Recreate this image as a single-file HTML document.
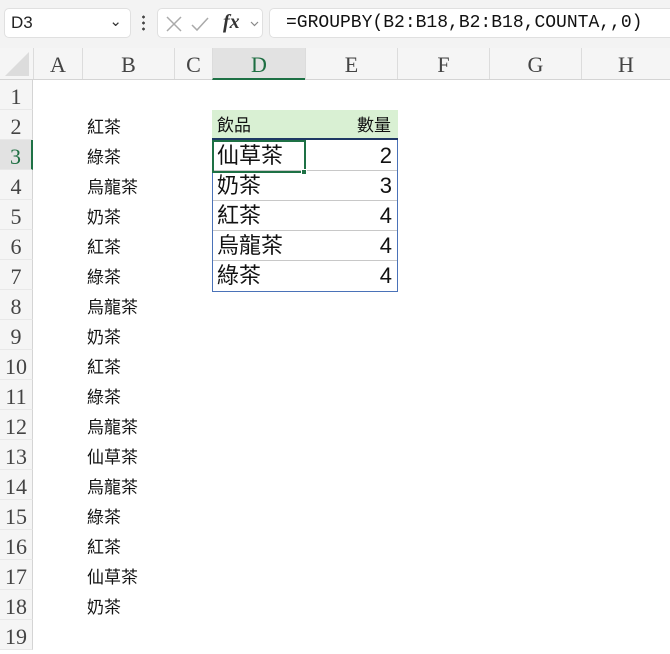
<!DOCTYPE html><html><head><meta charset="utf-8"><style>
*{margin:0;padding:0;box-sizing:border-box}
body{width:670px;height:638px;overflow:hidden;background:#fff;font-family:"Liberation Sans","Noto Sans CJK TC",sans-serif;position:relative}
.top{position:absolute;left:0;top:0;width:670px;height:48px;background:#f3f3f3}
.box{position:absolute;background:#fff;border:1px solid #e0e0e0;border-radius:5px;top:8px;height:30px}
.hdr{position:absolute;top:48px;left:0;width:670px;height:32px;background:#f5f5f5;border-bottom:1px solid #d4d4d4}
.ch{position:absolute;top:0;height:31px;font-family:"Liberation Serif",serif;font-size:22px;color:#444;text-align:center;line-height:34px;border-left:1px solid #dcdcdc}
.rh{position:absolute;left:0;width:33px;background:#f5f5f5;font-family:"Liberation Serif",serif;font-size:22px;color:#444;text-align:center;border-right:1px solid #d4d4d4;border-bottom:1px solid #e8e8e8}
.t{position:absolute;font-size:17px;color:#111;line-height:30px}
.tb{position:absolute;left:212px;width:186px;height:30px;font-size:22px;line-height:30px;color:#111;border-bottom:1px solid #c8c8c8}
.tb span{position:absolute;left:5px}.tb b{position:absolute;right:6px;font-weight:normal;font-family:"Liberation Sans",sans-serif}
</style></head><body>
<div class="top"></div>
<div class="box" style="left:4px;width:127px"><span style="position:absolute;left:6px;top:4px;font-size:17px;color:#222">D3</span><span style="position:absolute;right:8px;top:3px;font-size:15px;color:#333">&#8964;</span></div>
<div style="position:absolute;left:142px;top:14px;width:3px;height:18px;background:radial-gradient(circle,#444 1.3px,transparent 1.5px) 0 0/3px 6px"></div>
<div class="box" style="left:157px;width:106px">
<svg width="106" height="30" style="position:absolute;left:0;top:0"><path d="M9 8l14 14M23 8L9 22" stroke="#aaa" stroke-width="1.5" fill="none"/><path d="M34 16l5 5 11-12" stroke="#aaa" stroke-width="1.5" fill="none"/><path d="M93 13l3.5 3.5 3.5-3.5" stroke="#888" stroke-width="1.2" fill="none"/></svg>
<span style="position:absolute;left:65px;top:2px;font-family:'Liberation Serif',serif;font-style:italic;font-weight:bold;font-size:20px;color:#333">fx</span></div>
<div class="box" style="left:269px;width:410px"><span style="position:absolute;left:16px;top:4px;font-family:'Liberation Mono','DejaVu Sans Mono',monospace;font-size:18px;color:#111">=GROUPBY(B2:B18,B2:B18,COUNTA,,0)</span></div>
<div class="hdr">
<svg width="33" height="31" style="position:absolute;left:0;top:0"><path d="M29 4V28H5Z" fill="#dcdcdc"/></svg>
<div class="ch" style="left:33px;width:49px">A</div>
<div class="ch" style="left:82px;width:92px">B</div>
<div class="ch" style="left:174px;width:38px">C</div>
<div class="ch" style="left:212px;width:93px;background:#e2e2e2;color:#1e6e42;border-bottom:2px solid #1e7145;height:32px">D</div>
<div class="ch" style="left:305px;width:92px">E</div>
<div class="ch" style="left:397px;width:92px">F</div>
<div class="ch" style="left:489px;width:92px">G</div>
<div class="ch" style="left:581px;width:89px">H</div>
</div>
<div id="rows"></div>
<script>
var names=["","紅茶","綠茶","烏龍茶","奶茶","紅茶","綠茶","烏龍茶","奶茶","紅茶","綠茶","烏龍茶","仙草茶","烏龍茶","綠茶","紅茶","仙草茶","奶茶"];
var h="";
for(var i=0;i<19;i++){var y=80+i*30;
h+='<div class="rh" style="top:'+y+'px;height:30px;line-height:34px;'+(i==2?'color:#1e6e42;background:#e2e2e2;border-right:2px solid #1e7145':'')+'">'+(i+1)+'</div>';
if(i>0&&i<18)h+='<div class="t" style="left:87px;top:'+(y+3)+'px">'+names[i]+'</div>';}
document.getElementById('rows').innerHTML=h;
</script>
<div style="position:absolute;left:212px;top:110px;width:186px;height:30px;background:#d9f0d3;border-bottom:2px solid #1f3864"></div>
<div class="t" style="left:217px;top:111px">飲品</div><div class="t" style="left:357px;top:111px">數量</div>
<div class="tb" style="top:141px"><span>仙草茶</span><b>2</b></div>
<div class="tb" style="top:171px"><span>奶茶</span><b>3</b></div>
<div class="tb" style="top:201px"><span>紅茶</span><b>4</b></div>
<div class="tb" style="top:231px"><span>烏龍茶</span><b>4</b></div>
<div class="tb" style="top:261px;border-bottom:none"><span>綠茶</span><b>4</b></div>
<div style="position:absolute;left:212px;top:140px;width:186px;height:152px;border:1px solid #4a72b8;border-top:none"></div>
<div style="position:absolute;left:212px;top:140px;width:94px;height:33px;border:2px solid #1e7145"></div>
<div style="position:absolute;left:301px;top:169px;width:6px;height:6px;background:#1e7145;border:1px solid #fff"></div>
</body></html>
